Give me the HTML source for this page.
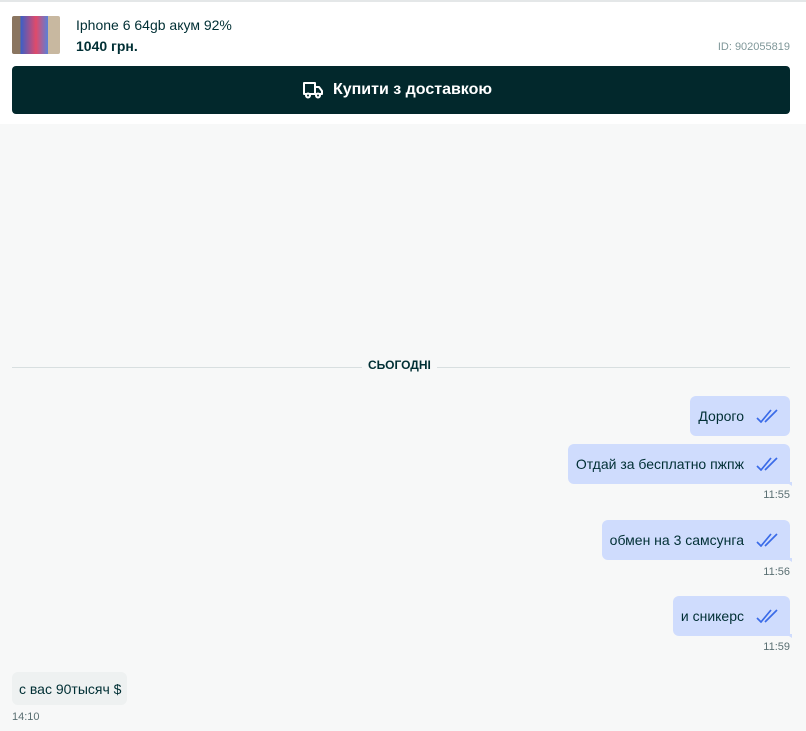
<!DOCTYPE html>
<html><head><meta charset="utf-8"><style>
*{margin:0;padding:0;box-sizing:border-box}
body{width:806px;height:731px;overflow:hidden;background:#f7f8f8;font-family:"Liberation Sans","DejaVu Sans",sans-serif;color:#002f34;position:relative}
.hdr{position:absolute;left:0;top:0;width:806px;height:124px;background:#fff;border-top:2px solid #e4e7e8}
.thumb{position:absolute;left:12px;top:14px;width:48px;height:38px;background:linear-gradient(90deg,#8a7560 0 18%,#3a5fc8 18%,#e04a6a 50%,#5a80d8 75%,#c8b8a0 75%);border-radius:2px}
.t1{position:absolute;left:76px;top:15px;font-size:14px}
.t2{position:absolute;left:76px;top:36px;font-size:14px;font-weight:bold}
.id{position:absolute;right:16px;top:39px;font-size:11px;color:#7f9799}
.btn{position:absolute;left:12px;top:64px;width:778px;height:48px;background:#02282c;border-radius:4px;color:#fff;font-weight:bold;font-size:16px;display:flex;align-items:center;justify-content:center;gap:9px;padding-right:8px}
.sep{position:absolute;left:12px;right:16px;top:367px;height:1px;background:#d8dfe0}
.sepl{position:absolute;left:362px;top:358px;padding:0 6px;background:#f7f8f8;font-size:12px;font-weight:bold}
.b{position:absolute;right:16px;height:40px;background:#cfdcfd;border-radius:6px;font-size:14px;display:flex;align-items:center;padding:0 10px 0 8px;gap:12px}
.b.tail{border-bottom-right-radius:0}
.b.tail:after{content:"";position:absolute;right:-2px;bottom:-2px;width:0;height:0;border-left:6px solid transparent;border-top:4px solid #cfdcfd}
.tm{position:absolute;right:16px;font-size:11px;color:#5a6f72}
.in{position:absolute;left:12px;top:672px;height:33px;padding:0 6px 0 7px;background:#eef1f1;border-radius:6px;font-size:14px;display:flex;align-items:center}
</style></head><body>
<div class="hdr">
<div class="thumb"></div>
<div class="t1">Iphone 6 64gb акум 92%</div>
<div class="t2">1040 грн.</div>
<div class="id">ID: 902055819</div>
<div class="btn"><svg width="22" height="20" viewBox="0 0 22 20" fill="none" stroke="#fff" stroke-width="2" stroke-linejoin="round"><path d="M2 3h11v11H2zM13 7h4l3 4v3h-7"/><circle cx="6" cy="15.5" r="2" fill="#02282c"/><circle cx="16" cy="15.5" r="2" fill="#02282c"/></svg>Купити з доставкою</div>
</div>
<div class="sep"></div>
<div class="sepl">СЬОГОДНІ</div>
<svg style="display:none"><symbol id="ck" viewBox="0 0 24 14"><path d="M1 9l4 4L15 1M9 13L21 1" fill="none" stroke="#3a6be8" stroke-width="1.7"/></symbol></svg>
<div class="b" style="top:396px">Дорого<svg width="24" height="14"><use href="#ck"/></svg></div>
<div class="b tail" style="top:444px">Отдай за бесплатно пжпж<svg width="24" height="14"><use href="#ck"/></svg></div>
<div class="tm" style="top:489px">11:55</div>
<div class="b tail" style="top:520px">обмен на 3 самсунга<svg width="24" height="14"><use href="#ck"/></svg></div>
<div class="tm" style="top:566px">11:56</div>
<div class="b tail" style="top:596px">и сникерс<svg width="24" height="14"><use href="#ck"/></svg></div>
<div class="tm" style="top:641px">11:59</div>
<div class="in">с вас 90тысяч $</div>
<div class="tm" style="left:12px;right:auto;top:711px">14:10</div>
</body></html>
